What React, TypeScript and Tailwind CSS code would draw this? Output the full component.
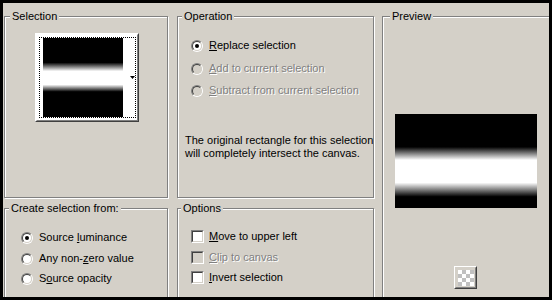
import React from "react";

type GroupProps = {
  label: string;
  className?: string;
  labelClass?: string;
  children?: React.ReactNode;
};

function Group({ label, className = "", labelClass = "left-[4px]", children }: GroupProps) {
  return (
    <div
      className={`relative shrink-0 border border-[#808080] shadow-[inset_1px_1px_0_#fff,1px_1px_0_#fff] ${className}`}
    >
      <span className={`absolute top-[-7px] bg-[#d4d0c8] px-[2px] leading-[13px] whitespace-nowrap ${labelClass}`}>
        {label}
      </span>
      {children}
    </div>
  );
}

function Radio({ checked = false, disabled = false }: { checked?: boolean; disabled?: boolean }) {
  return (
    <span className="block w-3 h-3 shrink-0 rounded-full border border-t-[#808080] border-l-[#808080] border-b-white border-r-white">
      <span
        className={`flex items-center justify-center w-full h-full rounded-full border border-t-[#404040] border-l-[#404040] border-b-[#d4d0c8] border-r-[#d4d0c8] ${
          disabled ? "bg-[#d4d0c8]" : "bg-white"
        }`}
      >
        {checked && <span className="block w-1 h-1 rounded-full bg-black" />}
      </span>
    </span>
  );
}

function Check({ disabled = false }: { disabled?: boolean }) {
  return (
    <span className="block w-[13px] h-[13px] shrink-0 border border-t-[#808080] border-l-[#808080] border-b-white border-r-white">
      <span
        className={`block w-full h-full border border-t-[#404040] border-l-[#404040] border-b-[#d4d0c8] border-r-[#d4d0c8] ${
          disabled ? "bg-[#d4d0c8]" : "bg-white"
        }`}
      />
    </span>
  );
}

const dim = "text-[#808080] [text-shadow:1px_1px_0_#fff]";

const checker = [
  "bg-white", "bg-[#c0c0c0]", "bg-white", "bg-[#c0c0c0]",
  "bg-[#c0c0c0]", "bg-white", "bg-[#c0c0c0]", "bg-white",
  "bg-white", "bg-[#c0c0c0]", "bg-white", "bg-[#c0c0c0]",
  "bg-[#c0c0c0]", "bg-white", "bg-[#c0c0c0]", "bg-white",
];

export default function App() {
  return (
    <div className="w-[552px] h-[300px] bg-black p-[3px]">
      <div className="w-full h-full bg-[#d4d0c8] overflow-hidden flex items-start pl-[1px] pt-[13px] text-[11px] leading-[13px] text-black font-['Liberation_Sans',Arial,sans-serif]">
        {/* left column */}
        <div className="flex flex-col w-[164px] shrink-0">
          <Group label="Selection" className="h-[182px]" labelClass="left-[5px]">
            <div className="pl-[30px] pt-[16px]">
              <div className="w-[104px] h-[89px] border border-t-white border-l-white border-b-[#404040] border-r-[#404040]">
                <div className="w-full h-full border border-t-white border-l-white border-b-[#808080] border-r-[#808080] bg-white pl-[2px] pt-[2px]">
                  <div className="w-[97px] h-[81px] border border-dotted border-black flex">
                    <div className="ml-[3px] w-[80px] h-[79px] bg-[linear-gradient(to_bottom,#000_0%,#000_31%,#fff_42%,#fff_59%,#000_68%,#000_100%)]" />
                    <div className="flex-1 flex items-center justify-end">
                      <svg width="5" height="3" viewBox="0 0 5 3" className="block">
                        <polygon points="0,0 5,0 2.5,3" fill="#000" />
                      </svg>
                    </div>
                  </div>
                </div>
              </div>
            </div>
          </Group>

          <Group label="Create selection from:" className="mt-[10px] h-[120px]" labelClass="left-[4px]">
            <div className="pl-[16px] pt-[22px] flex flex-col">
              <div className="flex items-center h-[13px]">
                <Radio checked />
                <span className="ml-[6px]">
                  Source <span className="underline">l</span>uminance
                </span>
              </div>
              <div className="flex items-center h-[13px] mt-[8px]">
                <Radio />
                <span className="ml-[6px]">
                  Any non-<span className="underline">z</span>ero value
                </span>
              </div>
              <div className="flex items-center h-[13px] mt-[7px]">
                <Radio />
                <span className="ml-[6px]">
                  S<span className="underline">o</span>urce opacity
                </span>
              </div>
            </div>
          </Group>
        </div>

        {/* middle column */}
        <div className="ml-[9px] flex flex-col w-[197px] shrink-0">
          <Group label="Operation" className="h-[182px]">
            <div className="pl-[13px] pt-[22px] flex flex-col">
              <div className="flex items-center h-[13px]">
                <Radio checked />
                <span className="ml-[6px]">
                  <span className="underline">R</span>eplace selection
                </span>
              </div>
              <div className="flex items-center h-[13px] mt-[10px]">
                <Radio disabled />
                <span className={`ml-[6px] ${dim}`}>
                  <span className="underline">A</span>dd to current selection
                </span>
              </div>
              <div className="flex items-center h-[13px] mt-[9px]">
                <Radio disabled />
                <span className={`ml-[6px] ${dim}`}>
                  <span className="underline">S</span>ubtract from current selection
                </span>
              </div>
            </div>
            <p className="pl-[7px] mt-[37px] whitespace-nowrap">
              The original rectangle for this selection
              <br />
              will completely intersect the canvas.
            </p>
          </Group>

          <Group label="Options" className="mt-[10px] h-[120px]" labelClass="left-[3px]">
            <div className="pl-[13px] pt-[21px] flex flex-col">
              <div className="flex items-center h-[13px]">
                <Check />
                <span className="ml-[5px]">
                  <span className="underline">M</span>ove to upper left
                </span>
              </div>
              <div className="flex items-center h-[13px] mt-[8px]">
                <Check disabled />
                <span className={`ml-[5px] ${dim}`}>
                  <span className="underline">C</span>lip to canvas
                </span>
              </div>
              <div className="flex items-center h-[13px] mt-[7px]">
                <Check />
                <span className="ml-[5px]">
                  <span className="underline">I</span>nvert selection
                </span>
              </div>
            </div>
          </Group>
        </div>

        {/* preview */}
        <div className="ml-[8px] w-[170px] shrink-0">
          <Group label="Preview" className="h-[300px]" labelClass="left-[7px]">
            <div className="pl-[12px] pt-[97px]">
              <div className="w-[142px] h-[94px] bg-[linear-gradient(to_bottom,#000_0%,#000_35%,#fff_49%,#fff_73%,#000_88%,#000_100%)]" />
              <div className="ml-[59px] mt-[58px] w-[23px] h-[23px] border border-t-white border-l-white border-b-[#404040] border-r-[#404040]">
                <div className="w-full h-full border border-t-[#d4d0c8] border-l-[#d4d0c8] border-b-[#808080] border-r-[#808080] flex items-center justify-center">
                  <div className="grid grid-cols-4 w-[16px] h-[16px]">
                    {checker.map((c, i) => (
                      <div key={i} className={`w-[4px] h-[4px] ${c}`} />
                    ))}
                  </div>
                </div>
              </div>
            </div>
          </Group>
        </div>
      </div>
    </div>
  );
}
